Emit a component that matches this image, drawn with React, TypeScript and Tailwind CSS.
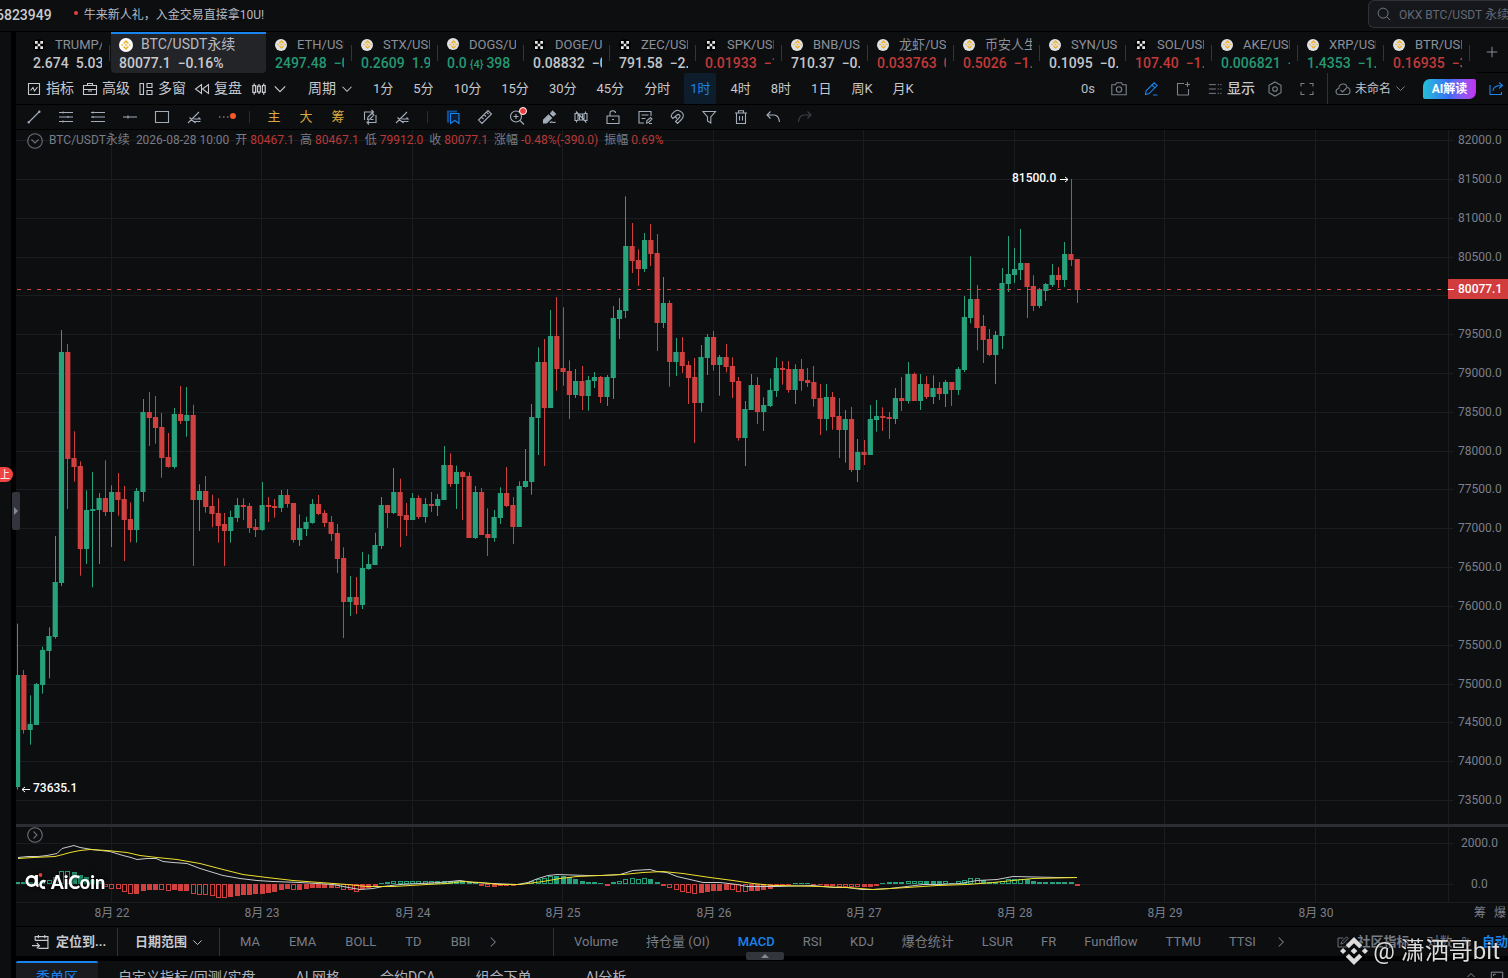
import React from "react";

/* ---------- market data ---------- */

type Quote = { name: string; ex: "bn" | "okx"; price: React.ReactNode; chg: string; tone: "up" | "down" | "flat"; active?: boolean };

const QUOTES: Quote[] = [
  { name: "TRUMP/USDT", ex: "okx", price: "2.674", chg: "5.03%", tone: "flat" },
  { name: "BTC/USDT永续", ex: "bn", price: "80077.1", chg: "−0.16%", tone: "flat", active: true },
  { name: "ETH/USDT", ex: "bn", price: "2497.48", chg: "−0.21%", tone: "up" },
  { name: "STX/USDT", ex: "bn", price: "0.2609", chg: "1.95%", tone: "up" },
  { name: "DOGS/USDT", ex: "bn", price: <>0.0<small className="px-[3px] text-[11px]">{"{4}"}</small>398</>, chg: "", tone: "up" },
  { name: "DOGE/USDT", ex: "okx", price: "0.08832", chg: "−0.3%", tone: "flat" },
  { name: "ZEC/USDT", ex: "okx", price: "791.58", chg: "−2.7%", tone: "flat" },
  { name: "SPK/USDT", ex: "okx", price: "0.01933", chg: "−1.2%", tone: "down" },
  { name: "BNB/USDT", ex: "bn", price: "710.37", chg: "−0.8%", tone: "flat" },
  { name: "龙虾/USDT", ex: "bn", price: "0.033763", chg: "0.1%", tone: "down" },
  { name: "币安人生", ex: "bn", price: "0.5026", chg: "−1.4%", tone: "down" },
  { name: "SYN/USDT", ex: "bn", price: "0.1095", chg: "−0.9%", tone: "flat" },
  { name: "SOL/USDT", ex: "okx", price: "107.40", chg: "−1.1%", tone: "down" },
  { name: "AKE/USDT", ex: "bn", price: "0.006821", chg: "−2%", tone: "up" },
  { name: "XRP/USDT", ex: "bn", price: "1.4353", chg: "−1.1%", tone: "up" },
  { name: "BTR/USDT", ex: "bn", price: "0.16935", chg: "−3%", tone: "down" },
];

/* Candle rows: high, low, body top, body bottom in thirds of a pixel below `base`; 1 = rising. */
type Row = [number, number, number, number, 0 | 1];
const BLOCKS: { base: number; rows: Row[] }[] = [
  {
    base: 180,
    rows: [
      [941, 1439, 1095, 1431, 1], [1080, 1271, 1095, 1259, 0], [1156, 1304, 1242, 1259, 1], [1119, 1245, 1122, 1244, 1],
      [1010, 1151, 1020, 1125, 1], [952, 1105, 978, 1023, 1], [678, 986, 816, 981, 1], [60, 828, 126, 819, 1],
      [102, 597, 126, 447, 0], [364, 515, 444, 471, 0], [454, 797, 468, 717, 0], [541, 762, 600, 717, 1],
      [486, 832, 597, 602, 1], [549, 762, 564, 600, 1], [451, 618, 564, 606, 0], [526, 711, 546, 606, 1],
      [489, 617, 546, 570, 0], [528, 753, 567, 630, 0], [577, 697, 627, 660, 0], [534, 698, 543, 660, 1],
      [267, 575, 306, 546, 1], [246, 408, 306, 324, 0], [258, 401, 321, 354, 0], [309, 503, 351, 444, 0],
      [369, 473, 441, 471, 0], [294, 476, 312, 471, 1], [228, 342, 312, 333, 0], [231, 380, 315, 333, 1],
      [284, 768, 315, 570, 0], [523, 663, 543, 570, 1], [498, 608, 543, 591, 0], [554, 652, 588, 612, 0],
      [565, 698, 609, 648, 0], [609, 768, 642, 663, 0], [602, 698, 621, 663, 1], [564, 636, 585, 624, 1],
      [565, 630, 585, 591, 0], [579, 669, 588, 654, 0], [627, 681, 651, 660, 0],
    ],
  },
  {
    base: 290,
    rows: [
      [186, 332, 255, 330, 1], [231, 306, 255, 261, 0], [237, 293, 258, 264, 0], [210, 276, 225, 264, 1],
      [208, 263, 225, 252, 0], [249, 368, 249, 360, 0], [283, 378, 324, 360, 1], [290, 348, 306, 327, 1],
      [237, 311, 252, 309, 1], [225, 285, 252, 282, 0], [270, 321, 279, 309, 0], [288, 363, 306, 342, 0],
      [312, 459, 339, 417, 0], [382, 654, 414, 546, 0], [468, 588, 531, 546, 1], [471, 582, 531, 555, 0],
      [396, 567, 444, 555, 1], [403, 449, 432, 447, 1], [338, 435, 375, 435, 1], [231, 387, 255, 378, 1],
      [255, 324, 255, 279, 0], [144, 282, 216, 279, 1], [176, 381, 216, 288, 0], [249, 348, 285, 300, 0],
      [219, 300, 234, 300, 1], [226, 297, 234, 291, 0], [234, 308, 252, 291, 1], [216, 276, 252, 258, 0],
      [222, 288, 237, 258, 1], [78, 240, 135, 240, 1], [100, 201, 135, 192, 0], [137, 267, 156, 192, 1],
      [153, 300, 156, 171, 0], [157, 354, 168, 354, 0], [198, 357, 216, 354, 1], [204, 345, 216, 345, 0],
      [265, 408, 342, 354, 0], [270, 365, 291, 354, 1], [202, 312, 219, 294, 1], [141, 261, 219, 258, 0],
      [231, 372, 255, 321, 0], [184, 321, 198, 321, 1], [87, 203, 183, 201, 1],
    ],
  },
  {
    base: 50,
    rows: [
      [672, 944, 711, 906, 1], [502, 825, 546, 714, 1], [477, 858, 546, 684, 0], [390, 684, 468, 684, 1],
      [351, 632, 468, 567, 0], [382, 617, 564, 576, 0], [541, 717, 573, 645, 0], [567, 654, 603, 645, 1],
      [558, 690, 603, 648, 0], [588, 692, 600, 648, 1], [576, 624, 591, 603, 1], [588, 669, 591, 651, 0],
      [585, 678, 591, 651, 1], [378, 657, 414, 594, 1], [354, 477, 390, 417, 1], [49, 414, 198, 393, 1],
      [129, 279, 198, 243, 0], [208, 318, 240, 267, 0], [159, 276, 180, 267, 1], [132, 258, 180, 222, 0],
      [162, 513, 219, 429, 0], [291, 444, 369, 429, 1], [361, 620, 369, 546, 0], [474, 588, 516, 546, 1],
      [471, 579, 516, 558, 0], [543, 672, 555, 594, 0], [534, 789, 591, 669, 0], [495, 695, 531, 669, 1],
      [462, 585, 471, 534, 1], [453, 572, 471, 555, 0], [525, 647, 531, 555, 1], [492, 577, 531, 561, 0],
      [532, 654, 558, 606, 0], [591, 782, 603, 774, 0], [663, 858, 687, 774, 1], [582, 690, 615, 690, 1],
      [591, 732, 615, 696, 0], [652, 753, 675, 696, 1], [595, 681, 630, 678, 1], [532, 651, 564, 633, 1],
      [543, 614, 564, 570, 0], [543, 638, 567, 630, 0], [553, 672, 567, 630, 1],
    ],
  },
  {
    base: 190,
    rows: [
      [117, 212, 147, 183, 0], [144, 201, 180, 189, 0], [138, 260, 186, 237, 0], [192, 345, 234, 297, 0],
      [192, 332, 231, 297, 1], [216, 329, 231, 291, 0], [234, 414, 288, 330, 0], [270, 428, 297, 330, 1],
      [261, 456, 297, 450, 0], [357, 486, 396, 450, 1], [360, 435, 396, 405, 0], [255, 405, 297, 405, 1],
      [240, 335, 288, 300, 1], [262, 333, 288, 294, 0], [276, 357, 291, 297, 0], [204, 312, 234, 297, 1],
      [171, 273, 234, 243, 0], [126, 251, 162, 243, 1], [158, 243, 162, 243, 0], [162, 270, 192, 243, 1],
      [169, 237, 192, 231, 0], [166, 252, 204, 231, 1], [186, 240, 204, 222, 0], [180, 261, 186, 222, 1],
      [186, 258, 186, 210, 0], [141, 225, 147, 210, 1],
    ],
  },
  {
    base: 30,
    rows: [
      [408, 636, 471, 630, 1], [289, 490, 417, 474, 1], [375, 571, 417, 504, 0], [465, 609, 498, 540, 0],
      [507, 588, 537, 585, 0], [513, 672, 525, 585, 1], [324, 567, 369, 528, 1], [228, 396, 342, 372, 1],
      [264, 369, 327, 345, 1], [207, 360, 309, 330, 1], [309, 474, 309, 381, 0], [346, 453, 378, 438, 0],
      [384, 444, 387, 438, 1], [369, 423, 372, 393, 1], [312, 381, 345, 375, 1], [321, 384, 345, 360, 0],
      [246, 381, 282, 360, 1], [57, 318, 282, 300, 0], [297, 429, 297, 390, 0],
    ],
  },
];
const CANDLES = BLOCKS.flatMap((b) =>
  b.rows.map(([h, l, t, d, up]) => ({ h: b.base + h / 3, l: b.base + l / 3, t: b.base + t / 3, d: b.base + d / 3, up })),
);

/* Histogram: signed bar height, "h" marks a hollow bar. */
const HIST = (
  "2 2 2 2 3h 4h 7h 13h 13h 12 9 7 4 2 -3h -5h -5h -8h -10h -10 -7 -6 -6 -6h -7h -6 -7 -7 -10h -11h -11h -12h -14h -14h -13 -12 -11 -11 -10 -10 " +
  "-9 -8 -6 -5 -6h -6 -5 -4 -4 -4 -4 -4h -6h -6h -8h -5 -4 -3 1 2 3h 3h 3h 3h 3h 3h 3h 3 3 3 3 3 2 1 -2 -3h -3 -2 -2 -2 " +
  "-1 1 3h 5h 6h 8h 8 8 7 5 3 2 2 1 -2 2 3h 5h 6h 5h 6h 5 2 -2 -4h -6h -8h -9h -10h -9 -8 -7 -7 -6 -6h -8h -8h -7 -7 -6 " +
  "-5 -2 -2 -1 1 1 1 -1 -1 -2 -2 -3h -3h -3h -3h -3 -3 -2 1 2 2 2 3h 3h 3h 3 3 3 3h 1 3h 4h 6h 6h 4 2 2 3h 5h 5h " +
  "5h 5 3 2 2 2 2 2 2 -2"
).split(" ");

const DIF =
  "2,42 12,41 22,41 31,40 41,38 46,33 58,30 64,32 76,34 94,36 107,40 115,42 121,44 131,43 140,43 147,46 157,47 171,48 184,53 207,60 224,63 241,65 257,66 284,67 317,69 327,71 344,74 357,73 367,71 384,69 404,68 424,67 444,65 457,67 477,68 501,69 512,67 522,63 532,60 541,59 571,60 587,60 604,59 617,55 634,54 641,56 651,57 661,61 674,64 687,67 704,67 721,69 731,71 761,71 797,70 817,72 831,72 846,74 857,74 874,73 891,71 907,69 924,69 944,68 961,65 981,64 997,61 1041,62 1061,62";
const DEA =
  "2,43 17,42 39,41 47,39 54,37 64,35 74,34 91,35 111,37 124,40 141,42 161,44 184,48 207,54 227,59 251,62 277,65 304,67 331,69 351,71 377,71 411,69 431,68 447,66 464,67 484,69 504,69 527,66 544,63 561,61 584,60 607,59 627,57 647,56 667,58 694,62 717,65 737,68 757,70 764,70 804,71 831,72 857,74 891,72 921,70 951,69 977,67 997,65 1017,63 1061,62";

const X0 = 1.7;
const STEP = 6.27;
const GREEN = "#26a17b";
const RED = "#d0403f";
const GRID = "#1b1c1f";
const DAYS = [95, 245, 396, 546, 697, 847, 998, 1148, 1299];
const PRICES = Array.from({ length: 18 }, (_, i) => ({ label: (82000 - i * 500).toFixed(1), y: Math.floor(10.7 + i * 38.81) }));

/* ---------- icons ---------- */

function Ico({ children, size = 16, w = 1.1 }: { children: React.ReactNode; size?: number; w?: number }) {
  return (
    <svg width={size} height={size} viewBox="0 0 16 16" fill="none" stroke="currentColor" strokeWidth={w} className="shrink-0" aria-hidden="true">
      {children}
    </svg>
  );
}

const Down = ({ size = 12 }: { size?: number }) => <Ico size={size} w={1.4}><path d="M2 5l6 6 6-6" /></Ico>;
const Right = () => <Ico size={12} w={1.4}><path d="M5 2l6 6-6 6" /></Ico>;
const Shape = () => <path d="M2 14L13 3M3.500 8.500l4 4M7.500 10H14l-1.500-1.500M14.500 12.500H8l1.500 1.500" />;

function BinanceMark({ className, color }: { className?: string; color: string }) {
  return (
    <svg viewBox="0 0 20 20" className={className} fill={color} aria-hidden="true">
      <path d="M10 0l5.9 5.9-2.2 2.2L10 4.4 6.3 8.1 4.1 5.9zM10 20l-5.9-5.9 2.2-2.2 3.7 3.7 3.7-3.7 2.2 2.2zM0 10l2.2-2.2L4.4 10l-2.2 2.2zM15.6 10l2.2-2.2L20 10l-2.2 2.2zM7.6 10L10 7.6l2.4 2.4-2.4 2.4z" />
    </svg>
  );
}

function Coin({ ex, big }: { ex: "bn" | "okx"; big?: boolean }) {
  if (ex === "okx")
    return (
      <svg width="12" height="12" viewBox="0 0 12 12" className="shrink-0" aria-hidden="true">
        <circle cx="6" cy="6" r="6" fill="#000" />
        <path fill="#e8e8e8" d="M2 2h2.7v2.7H2zM7.3 2H10v2.7H7.3zM4.7 4.7h2.6v2.6H4.7zM2 7.3h2.7V10H2zM7.3 7.3H10V10H7.3z" />
      </svg>
    );
  return (
    <span className={big ? "flex size-[14px] shrink-0 items-center justify-center rounded-full bg-white" : "flex size-3 shrink-0 items-center justify-center rounded-full bg-[#e2e2e2]"}>
      <BinanceMark color="#efb02e" className={big ? "size-[10px]" : "size-[9px]"} />
    </span>
  );
}

const TONES = { up: "text-[#259873]", down: "text-[#c23a3a]", flat: "text-[#c4c6ca]" };

/* ---------- top parts ---------- */

function TopBar() {
  return (
    <header className="flex h-8 shrink-0 items-start justify-between border-b border-black">
      <div className="flex h-[30px] items-center">
        <span className="-ml-1 text-[14px] font-medium text-[#c9ccd1]">6823949</span>
        <i className="ml-[22px] mr-[6px] mb-1 size-1 rounded-full bg-[#e5403f]" />
        <a href="#promo" className="text-[12px] text-[#b4bac4]">牛来新人礼，入金交易直接拿10U!</a>
      </div>
      <label className="flex h-7 w-[140px] items-center gap-2 overflow-hidden rounded-l-md border border-r-0 border-[#303138] bg-[#15171a] pl-2 text-[#777b85]">
        <Ico size={14}><circle cx="7" cy="7" r="5.7" /><path d="M11 11l4 4" /></Ico>
        <input aria-label="搜索" placeholder="OKX BTC/USDT 永续" className="w-[112px] shrink-0 bg-transparent pt-[2px] text-[12px] outline-none placeholder:text-[#646975]" />
      </label>
    </header>
  );
}

function QuoteTabs() {
  return (
    <nav className="flex h-[41px] shrink-0 overflow-hidden pl-2">
      {QUOTES.map((q) =>
        q.active ? (
          <button key={q.name} className="ml-px flex w-[155px] shrink-0 flex-col justify-center rounded-b-[4px] border-t-2 border-[#1a84ee] bg-[#232428] pt-px pl-2 text-left">
            <span className="flex items-center gap-2 text-[14px] leading-[19px] whitespace-nowrap text-[#b7bac0]">
              <Coin ex={q.ex} big />
              {q.name}
            </span>
            <span className="flex gap-[7px] text-[14px] leading-[19px] font-medium text-[#c8cacd]">
              <span>{q.price}</span>
              <span>{q.chg}</span>
            </span>
          </button>
        ) : (
          <button key={q.name} className="flex w-[86px] shrink-0 items-center text-left">
            <span className="ml-[9px] block w-[69px] overflow-hidden pt-[3px] whitespace-nowrap">
              <span className="flex items-center gap-[10px] text-[13px] leading-[19px] text-[#8b909b]">
                <Coin ex={q.ex} />
                {q.name}
              </span>
              <span className={`flex gap-[7px] text-[14px] leading-[19px] font-medium ${TONES[q.tone]}`}>
                <span>{q.price}</span>
                {q.chg && <span>{q.chg}</span>}
              </span>
            </span>
            <i className="ml-[7px] h-4 w-px bg-[#33353a]" />
          </button>
        ),
      )}
      <button aria-label="添加" className="ml-auto flex w-[32px] shrink-0 items-center justify-center border-b border-black text-[#8b909b]">
        <Ico size={14}><path d="M8 2v12M2 8h12" /></Ico>
      </button>
    </nav>
  );
}

const PERIODS = ["1分", "5分", "10分", "15分", "30分", "45分", "分时", "1时", "4时", "8时", "1日", "周K", "月K"];

function MainToolbar() {
  const item = "flex h-full items-center gap-1 text-[14px] text-[#c6c9ce]";
  return (
    <div className="flex h-8 shrink-0 items-center border-b border-black whitespace-nowrap">
      <div className="flex h-full items-center gap-2 pl-[10px]">
        <button className={item}><Ico><path d="M2.5 2.5h11v11h-11zM4.5 9.5l2.5-3 1.5 3.5 3-4" /></Ico>指标</button>
        <button className={item}><Ico><path d="M1.5 4.5h13v9h-13zM5.5 4.500v-2h5v2M1.500 8.500h13M6 10h4" /></Ico>高级</button>
        <button className={item}><Ico><path d="M2 2.500h3.500v11H2zM9 2.500h5v4H9zM9 9.500h5v4H9z" /></Ico>多窗</button>
        <button className={item}><Ico><path d="M7.500 3.500v9L1.500 8zM14.500 3.500v9L8.500 8z" /></Ico>复盘</button>
        <button aria-label="图表类型" className="flex items-center gap-[5px] text-[#c6c9ce]">
          <Ico size={18}><path d="M2.500 5h2.500v6H2.500zM3.700 3v2M3.700 11v2M6.700 5.500h2.500v5H6.700zM8 3.500v2M8 10.500v2M11 5h2.500v6H11zM12.200 3v2M12.200 11v2" /></Ico>
          <Down size={14} />
        </button>
      </div>
      <button className="ml-[21px] flex items-center gap-[5px] text-[14px] text-[#c6c9ce]">周期<Down /></button>
      <div className="ml-5 flex h-full items-center gap-5 text-[13px] text-[#c6c9ce]">
        {PERIODS.map((p) =>
          p === "1时" ? (
            <button key={p} aria-pressed="true" className="-mx-[6px] h-full rounded-[2px] bg-[#0e1d2c] px-[6px] text-[#1a84ee]">{p}</button>
          ) : (
            <button key={p}>{p}</button>
          ),
        )}
      </div>
      <div className="ml-auto flex h-full items-center text-[#7b8089]">
        <span className="mr-4 text-[13px] text-[#b9bcc2]">0s</span>
        <button aria-label="截图" className="mr-4"><Ico><path d="M.8 3.800h3.700l1-2h5l1 2h3.700v10H.8z" /><circle cx="8" cy="8.500" r="2.700" /></Ico></button>
        <button aria-label="画笔" className="mr-4 text-[#1a84ee]"><Ico><path d="M2.500 13.500l.6-3.700 8-8 3 2.800-8 8zM9 4l3 2.800M10 14h4.500" /></Ico></button>
        <button aria-label="新增窗口" className="mr-[17px]"><Ico><path d="M9 2.500H2.500v11.500h11V8M12.500 1v5M10 3.500h5" /></Ico></button>
        <button className="mr-3 flex items-center gap-[5px] text-[14px] font-medium text-[#c6c9ce]">
          <span className="text-[#7b8089]"><Ico size={14}><path d="M1 3h8M1 8h8M1 13h8M11 3h1.500M14 3h1.500M11 8h1.500M14 8h1.500M11 13h1.500M14 13h1.500" /></Ico></span>显示
        </button>
        <button aria-label="设置" className="mr-4"><Ico><path d="M8 1l6 3.300v7.400L8 15l-6-3.300V4.300z" /><circle cx="8" cy="8" r="2.300" /></Ico></button>
        <button aria-label="全屏" className="mr-3"><Ico><path d="M2 5.500V2.500h3.500M10.500 2.500H14v3M14 10.500v3h-3.500M5.500 13.500H2v-3" /></Ico></button>
        <i className="mr-[7px] h-full w-px bg-[#303238]" />
        <button className="mr-[17px] flex items-center gap-1 text-[12px] text-[#c0c3c9]">
          <span className="text-[#7b8089]"><Ico><path d="M4.500 13.500C0 13.500 0 8 3.800 7.500 4 2 11.500 1.500 12 6.500c4 .3 4 7 0 7zM5.500 9l2 2 4-4" /></Ico></span>未命名
          <span className="text-[#7b8089]"><Down size={11} /></span>
        </button>
        <button className="mr-3 h-5 w-[53px] rounded-[7px] rounded-tr-[2px] rounded-bl-[2px] bg-linear-to-r from-[#27bfd6] via-[#3a6cf4] to-[#c22df0] text-[12px] font-bold text-white">AI解读</button>
        <button aria-label="分享" className="mr-1 text-[#1a84ee]"><Ico><path d="M2 4v9.500h11.500V11M5 10c0-4 3-5.500 9-5.500M11 1.500l3.500 3-3.500 3" /></Ico></button>
      </div>
    </div>
  );
}

const cell = "relative flex w-8 shrink-0 items-center justify-center";

function DrawToolbar() {
  return (
    <div className="flex h-[25px] shrink-0 items-stretch border-b border-black pl-[2px] text-[#a3adba]">
      <button aria-label="线段" className={cell}><Ico><path d="M3 13L13 3" /><circle cx="2.700" cy="13.300" r=".7" /><circle cx="13.300" cy="2.700" r=".7" /></Ico></button>
      <button aria-label="通道" className={cell}><Ico><path d="M1 3.500h14M1 8h14M1 12.500h14M5 2.500v2M10 7v2M5 11.500v2" /></Ico></button>
      <button aria-label="水平线" className={cell}><Ico><path d="M1 3.500h14M1 8h14M1 12.500h14M3 7v2M3 2.500v2" /></Ico></button>
      <button aria-label="射线" className={cell}><Ico><path d="M1 8h14M6 6.500v3" /></Ico></button>
      <button aria-label="矩形" className={cell}><Ico><path d="M1.500 2.500h13v11h-13z" /></Ico></button>
      <button aria-label="斐波那契" className={cell}><Ico><Shape /></Ico></button>
      <button aria-label="更多" className={cell}>
        <Ico><path d="M1 8h1.500M5 8h1.500M9 8h1.500" /></Ico>
        <i className="absolute top-2 right-[6px] size-[6px] rounded-full bg-[#f8582a]" />
      </button>
      <i className="my-auto ml-[7px] mr-2 h-3 w-px bg-[#2a2c31]" />
      <button className={`${cell} text-[13px] text-[#dba93f]`}>主</button>
      <button className={`${cell} text-[13px] text-[#dba93f]`}>大</button>
      <button className={`${cell} text-[13px] text-[#dba93f]`}>筹</button>
      <button aria-label="复制图形" className={cell}><Ico><path d="M2.500 11V3H11M14 6v7.500H6M9.500 1l2 2-2 2M7 11.500l-2 2 2 2M5.500 10.500l.5-2.500 4-4 2 2-4 4zM8.500 10.500h3" /></Ico></button>
      <button aria-label="切换图形" className={cell}><Ico><Shape /></Ico></button>
      <i className="my-auto mx-[9px] h-3 w-px bg-[#2a2c31]" />
      <button aria-label="书签" className={`${cell} text-[#1a84ee]`}>
        <Ico><path d="M3 13.500V2.500h9" strokeWidth="2.200" stroke="#0d4f94" /><path d="M5.500 4.500h8.500v10l-4.200-3-4.300 3z" fill="#0b1d30" /></Ico>
      </button>
      <button aria-label="测量" className={cell}><Ico><path d="M1.500 11L11 1.500 14.500 5 5 14.500zM4.500 8l2 2M7 5.500l2 2M9.500 3l2 2" /></Ico></button>
      <button aria-label="放大" className={cell}>
        <Ico><circle cx="7" cy="7.500" r="5.500" /><path d="M11 11.500l4 4M7 5v5M4.500 7.500h5" /></Ico>
        <i className="absolute top-[2px] right-[6px] size-2 rounded-full border border-white bg-[#ef3b3b]" />
      </button>
      <button aria-label="画刷" className={cell}><Ico><path d="M2.500 14v-3l5-5 3 3-5 5zM9.500 4.500l2-2.500L14.500 5l-2.300 2z" fill="currentColor" /><path d="M9 14c2-3 3 1 5.500-1" /></Ico></button>
      <button aria-label="隐藏蜡烛" className={cell}><Ico><path d="M2 4.500h3v7H2zM3.500 2.500v2M3.500 11.500v2M11 4.500h3v7h-3zM12.500 2.500v2M12.500 11.500v2M6.500 5h3v6h-3zM3 2.500l10.500 11" /></Ico></button>
      <button aria-label="锁定" className={cell}><Ico><path d="M2 7h12v7.500H2zM5 7V4c0-3 5.500-3 5.500 0M7 10.500h2" /></Ico></button>
      <button aria-label="备注" className={cell}><Ico><path d="M14 7V2.500H2v11.500h5M4.500 6h7M4.500 9.500h4M9.500 14l.5-2.500 3.500-3 1.500 1.500-3.500 3.500zM12 14.500h3" /></Ico></button>
      <button aria-label="磁吸" className={cell}><Ico><path d="M4 9.500l-1.500-1.500C1 6 7 0 9.500 1.500 16 4 15 8 12 11l-3.500 3.500-2-2L10.500 8.500c1.500-2-1-4-2.500-2.500l-4 3.500zM6 7.500l2 2" /></Ico></button>
      <button aria-label="筛选" className={cell}><Ico><path d="M2 2.500h12.500L9.800 8v6L6.500 12V8z" /></Ico></button>
      <button aria-label="删除" className={cell}><Ico><path d="M2 4h12M5.500 4V1.800h5V4M3.500 4v10.500h9V4M6.500 7v4.500M9.500 7v4.500" /></Ico></button>
      <button aria-label="撤销" className={cell}><Ico><path d="M5.500 2.500L2 6l3.500 3.500M2 6h7c3 0 5 2.500 5.500 7" /></Ico></button>
      <button aria-label="重做" className={`${cell} text-[#3d4045]`}><Ico><path d="M10.500 2.500L14 6l-3.500 3.500M14 6H7c-3 0-5 2.500-5.500 7" /></Ico></button>
    </div>
  );
}

/* ---------- chart ---------- */

function ChartInfo() {
  const parts = [["开", "80467.1"], ["高", "80467.1"], ["低", "79912.0"], ["收", "80077.1"], ["涨幅", "-0.48%(-390.0)"], ["振幅", "0.69%"]];
  return (
    <div className="absolute top-px left-[11px] flex items-center text-[12px] leading-[17px] whitespace-nowrap text-[#787d87]">
      <button aria-label="收起" className="mr-[6px] pt-[2px] text-[#6b6f78]"><Ico><circle cx="8" cy="8" r="7.300" /><path d="M4.500 6.500L8 10l3.500-3.500" /></Ico></button>
      <span>BTC/USDT永续</span>
      <span className="ml-[6px]">2026-08-28 10:00</span>
      {parts.map(([k, v]) => (
        <span key={k} className="ml-[6px]">
          {k}
          <span className="ml-[3px] text-[#b93938]">{v}</span>
        </span>
      ))}
    </div>
  );
}

function PriceChart() {
  return (
    <section className="relative flex h-[694px] shrink-0">
      <svg width="100%" height="694" className="min-w-0 flex-1 font-[Roboto]" role="img" aria-label="K线图">
        <g stroke={GRID}>
          {PRICES.map((p) => <line key={p.label} x1="0" x2="100%" y1={p.y + 0.5} y2={p.y + 0.5} />)}
          {DAYS.map((x) => <line key={x} x1={x + 0.5} x2={x + 0.5} y1="0" y2="694" />)}
        </g>
        {CANDLES.map((c, i) => {
          const x = X0 + i * STEP;
          const col = c.up ? GREEN : RED;
          return (
            <g key={i} fill={col}>
              <rect x={Math.floor(x)} y={c.h} width="1" height={c.l - c.h} />
              <rect x={x - 2.7} y={Math.round(c.t)} width="5.2" height={Math.max(1, Math.round(c.d) - Math.round(c.t))} />
            </g>
          );
        })}
        <line x1="1" x2="100%" y1="159.5" y2="159.5" stroke={RED} strokeDasharray="4 6" />
        <g fill="#fff" fontSize="12" fontWeight="500">
          <text x="996" y="52">81500.0</text>
          <text x="17" y="662">73635.1</text>
        </g>
        <g stroke="#fff" fill="none">
          <path d="M1044 49.500h8M1049 47l3 2.500-3 2.500" />
          <path d="M14 659.500H6M9 657l-3 2.500 3 2.500" />
        </g>
      </svg>
      <svg width="60" height="694" className="shrink-0 font-[Roboto]" aria-label="价格轴">
        <path d="M.5 0v694" stroke={GRID} />
        {PRICES.map((p) => (
          <g key={p.label}>
            <path d={`M0 ${p.y + 0.5}h5`} stroke={GRID} />
            {p.label !== "80000.0" && <text x="10" y={p.y + 4} fontSize="12" fill="#7a7f89">{p.label}</text>}
          </g>
        ))}
        <rect y="149" width="60" height="20" fill="#d13c3c" />
        <path d="M0 159.500h6" stroke="#fff" />
        <text x="10" y="163" fontSize="12" fontWeight="500" fill="#fff">80077.1</text>
      </svg>
      <ChartInfo />
    </section>
  );
}

function MacdPane() {
  return (
    <section className="relative flex h-[76px] shrink-0 border-b border-[#1b1c1f]">
      <svg width="100%" height="75" className="min-w-0 flex-1" role="img" aria-label="MACD">
        <g stroke={GRID}>
          <line x1="0" x2="100%" y1="16.500" y2="16.500" />
          <line x1="0" x2="100%" y1="57.500" y2="57.500" />
          {DAYS.map((x) => <line key={x} x1={x + 0.5} x2={x + 0.5} y1="0" y2="75" />)}
        </g>
        {HIST.map((s, i) => {
          const v = parseInt(s, 10);
          const hollow = s.endsWith("h");
          const col = v > 0 ? GREEN : RED;
          const x = Math.floor(X0 + i * STEP) - 2;
          const h = Math.abs(v);
          const y = v > 0 ? 57 - h : 57;
          return hollow ? (
            <rect key={i} x={x + 0.5} y={y + 0.5} width="4" height={h - 1} fill="none" stroke={col} />
          ) : (
            <rect key={i} x={x} y={y} width="5" height={h} fill={col} />
          );
        })}
        <g transform="translate(0 -11.500)" fill="none">
          <polyline points={DIF} stroke="#c9cacd" />
          <polyline points={DEA} stroke="#efe02c" />
        </g>
      </svg>
      <svg width="60" height="75" className="shrink-0 font-[Roboto]" aria-label="MACD轴">
        <path d="M.5 0v75M0 16.500h5M0 57.500h5" stroke={GRID} />
        <g fontSize="12" fill="#7a7f89"><text x="13" y="20">2000.0</text><text x="23" y="61">0.0</text></g>
      </svg>
      <button aria-label="展开" className="absolute top-0 left-[11px] text-[#6b6f78]"><Ico><circle cx="8" cy="8" r="7.300" /><path d="M6.500 4.500L10 8l-3.500 3.500" /></Ico></button>
      <div className="absolute top-[43px] left-[9px] flex items-center gap-[2px] text-white drop-shadow-[0_0_2px_#000]">
        <svg width="24" height="24" viewBox="0 0 24 24" fill="none" stroke="#fff" strokeWidth="2.800" aria-hidden="true">
          <circle cx="6.500" cy="11" r="4.600" /><path d="M11.500 5v8.500c0 1.500 1 2 2 2" />
          <path d="M20.500 11.500c-6-2.500-7 7.500-.5 6" strokeWidth="2.600" />
          <circle cx="15.500" cy="5" r="1.900" fill="#d8432f" stroke="none" />
        </svg>
        <span className="font-[Lato] text-[18px] leading-[24px] font-black">AiCoin</span>
      </div>
    </section>
  );
}

function DateAxis() {
  return (
    <div className="flex h-6 shrink-0 border-b border-black text-[12px] text-[#7a7f89]">
      <svg height="23" className="min-w-0 flex-1 font-[Roboto,'Noto_Sans_CJK_SC']" aria-label="日期轴">
        {DAYS.map((x, i) => <text key={x} x={x + 1} y="14" textAnchor="middle" fontSize="12" fill="#7a7f89">{`8月 ${22 + i}`}</text>)}
      </svg>
      <div className="flex h-5 w-[36px] shrink-0 items-center gap-2 overflow-hidden whitespace-nowrap">
        <button className="ml-[2px]">筹</button>
        <button>爆</button>
      </div>
    </div>
  );
}

/* ---------- bottom parts ---------- */

function IndicatorBar() {
  return (
    <div className="flex h-[29px] shrink-0 items-center pt-px text-[13px] whitespace-nowrap text-[#787d87]">
      <button className="flex h-full w-[102px] shrink-0 items-center gap-[7px] border-r border-[#303238] pl-4 font-bold text-[#c6c9ce]">
        <Ico size={17}><path d="M3 6V2.500h12v11H6M3 6h12M6 1v3M12 1v3M0 11h7M4.500 8.500L7 11l-2.500 2.500" /></Ico>定位到...
      </button>
      <button className="flex h-full w-[102px] shrink-0 items-center gap-[5px] border-r border-[#303238] pl-[17px] font-bold text-[#c6c9ce]">日期范围<Down size={11} /></button>
      <div className="flex h-full w-[334px] shrink-0 items-center gap-[29px] border-r border-[#303238] pl-5">
        {["MA", "EMA", "BOLL", "TD", "BBI"].map((t) => <button key={t}>{t}</button>)}
        <button aria-label="更多主图指标" className="-ml-[12px]"><Right /></button>
      </div>
      <div className="flex h-full shrink-0 items-center gap-7 pl-5">
        {["Volume", "持仓量 (OI)", "MACD", "RSI", "KDJ", "爆仓统计", "LSUR", "FR", "Fundflow", "TTMU", "TTSI"].map((t) => (
          <button key={t} className={t === "MACD" ? "font-medium text-[#1a84ee]" : ""}>{t}</button>
        ))}
        <button aria-label="更多副图指标" className="-ml-[9px]"><Right /></button>
      </div>
      <div className="ml-auto flex shrink-0 items-center">
        <button className="flex items-center gap-2 font-bold"><Ico size={13}><path d="M9 2.500H2.500v11h11V8M6 10l1-3 6-6 2 2-6 6z" /></Ico>社区指标</button>
        <button className="ml-[17px]">对数</button>
        <button className="ml-[9px]">%</button>
        <button className="ml-[11px] font-bold text-[#1a84ee]">自动</button>
      </div>
    </div>
  );
}

function BottomTabs() {
  return (
    <div className="relative flex h-[27px] shrink-0 items-stretch border-t-[5px] border-black text-[14px] whitespace-nowrap text-[#b0b4bc]">
      <button aria-label="展开面板" className="absolute -top-[9px] left-[730px] flex h-2 w-[38px] items-center justify-center rounded-[2px] bg-[#33353d]">
        <svg width="8" height="4" aria-hidden="true"><path d="M0 4l4-4 4 4z" fill="#858991" /></svg>
      </button>
      <button className="h-[30px] w-[82px] shrink-0 rounded-t-[2px] border-t-2 border-[#1a84ee] bg-[#1a1b1f] text-[#1a84ee]">委单区</button>
      <div className="flex h-8 items-center gap-10 pl-5">
        {["自定义指标/回测/实盘", "AI 网格", "合约DCA", "组合下单"].map((t) => <button key={t}>{t}</button>)}
        <button className="ml-[14px]">AI分析</button>
      </div>
      <div className="mt-[9px] mr-[4px] ml-auto flex gap-3 text-[#8b909b]">
        <button aria-label="收起面板"><Ico size={14}><path d="M4 8l4-4 4 4" /></Ico></button>
        <button aria-label="最大化"><Ico size={14}><path d="M1.500 2.500h13v12h-13zM4 7V5h2.500" /></Ico></button>
      </div>
    </div>
  );
}

export default function App() {
  return (
    <div className="relative flex h-screen w-full flex-col overflow-hidden bg-[#0d0e10] font-[Roboto,'Noto_Sans_CJK_SC',sans-serif]">
      <TopBar />
      <div className="flex min-h-0 flex-1">
        <aside className="relative w-4 shrink-0 border-r-[5px] border-black">
          <span className="absolute top-[435px] left-0 flex h-[15px] w-[13px] items-center rounded-r-full bg-[#ef4443] text-[10px] text-white">上</span>
          <button aria-label="展开侧栏" className="absolute top-[460px] left-3 z-10 flex h-[38px] w-2 items-center justify-center rounded-[2px] bg-[#33353d]">
            <svg width="4" height="8" aria-hidden="true"><path d="M0 0l4 4-4 4z" fill="#858991" /></svg>
          </button>
        </aside>
        <main className="flex min-w-0 flex-1 flex-col">
          <QuoteTabs />
          <MainToolbar />
          <DrawToolbar />
          <PriceChart />
          <div className="h-[3px] shrink-0 bg-[#2c2d33]" />
          <MacdPane />
          <DateAxis />
          <IndicatorBar />
          <BottomTabs />
        </main>
      </div>
      <div className="pointer-events-none absolute right-[8px] bottom-[9px] flex items-center text-[24px] leading-[36px] text-[#dcdcdc] drop-shadow-[0_0_1px_#000]">
        <BinanceMark color="#dcdcdc" className="mr-[5px] size-7" />
        <span>@ 潇洒哥bit</span>
      </div>
    </div>
  );
}
